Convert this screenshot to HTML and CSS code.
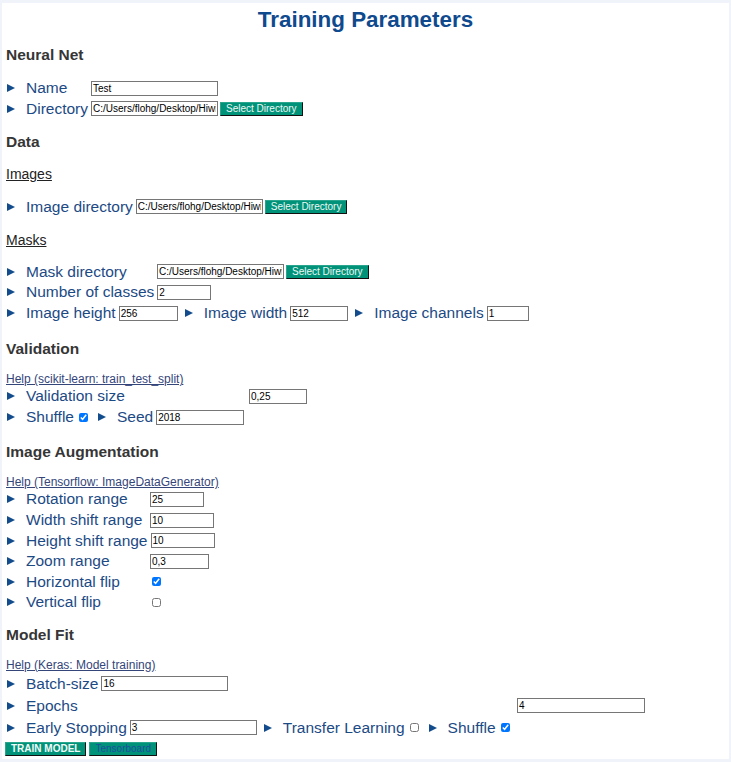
FILE: index.html
```html
<!DOCTYPE html>
<html lang="en">
<head>
<meta charset="utf-8">
<title>Training Parameters</title>
<link rel="stylesheet" href="styles.css">
</head>
<body>
<div class="panel">
  <h1 class="title">Training Parameters</h1>

  <h3 class="sec first">Neural Net</h3>
  <div class="row"><span class="tri"></span><span class="lbl w-name">Name</span><input class="inp w127" type="text" value="Test"></div>
  <div class="row"><span class="tri"></span><span class="lbl w-name">Directory</span><input class="inp w127" type="text" value="C:/Users/flohg/Desktop/Hiwi/Segmentation"><button class="btn">Select Directory</button></div>

  <h3 class="sec">Data</h3>
  <h4 class="sub">Images</h4>
  <div class="row"><span class="tri"></span><span class="lbl">Image directory</span><input class="inp w127" type="text" value="C:/Users/flohg/Desktop/Hiwi/Segmentation/images"><button class="btn">Select Directory</button></div>
  <h4 class="sub">Masks</h4>
  <div class="row"><span class="tri"></span><span class="lbl w-mask">Mask directory</span><input class="inp w127" type="text" value="C:/Users/flohg/Desktop/Hiwi/Segmentation/masks"><button class="btn">Select Directory</button></div>
  <div class="row"><span class="tri"></span><span class="lbl w-mask">Number of classes</span><input class="inp w54" type="text" value="2"></div>
  <div class="row"><span class="tri"></span><span class="lbl">Image height</span><input class="inp w59" type="text" value="256"><span class="tri mid"></span><span class="lbl">Image width</span><input class="inp w58" type="text" value="512"><span class="tri mid"></span><span class="lbl">Image channels</span><input class="inp w42" type="text" value="1"></div>

  <h3 class="sec gap-val">Validation</h3>
  <a class="help" href="#">Help (scikit-learn: train_test_split)</a>
  <div class="row"><span class="tri"></span><span class="lbl w-val">Validation size</span><input class="inp w58" type="text" value="0,25"></div>
  <div class="row"><span class="tri"></span><span class="lbl">Shuffle</span><input class="chk" type="checkbox" checked><span class="tri mid"></span><span class="lbl">Seed</span><input class="inp w88" type="text" value="2018"></div>

  <h3 class="sec gap-aug">Image Augmentation</h3>
  <a class="help" href="#">Help (Tensorflow: ImageDataGenerator)</a>
  <div class="row"><span class="tri"></span><span class="lbl w-aug">Rotation range</span><input class="inp w54" type="text" value="25"></div>
  <div class="row"><span class="tri"></span><span class="lbl w-aug">Width shift range</span><input class="inp w64" type="text" value="10"></div>
  <div class="row"><span class="tri"></span><span class="lbl w-aug">Height shift range</span><input class="inp w64" type="text" value="10"></div>
  <div class="row"><span class="tri"></span><span class="lbl w-aug">Zoom range</span><input class="inp w59" type="text" value="0,3"></div>
  <div class="row"><span class="tri"></span><span class="lbl w-aug">Horizontal flip</span><input class="chk" type="checkbox" checked></div>
  <div class="row"><span class="tri"></span><span class="lbl w-aug">Vertical flip</span><input class="chk" type="checkbox"></div>

  <h3 class="sec gap-fit">Model Fit</h3>
  <a class="help" href="#">Help (Keras: Model training)</a>
  <div class="fit">
    <div class="row tall"><span class="tri"></span><span class="lbl">Batch-size</span><input class="inp w127" type="text" value="16"></div>
    <div class="row tall"><span class="tri"></span><span class="lbl w-epochs">Epochs</span><input class="inp w128" type="text" value="4"></div>
    <div class="row tall"><span class="tri"></span><span class="lbl">Early Stopping</span><input class="inp w127" type="text" value="3"><span class="tri mid"></span><span class="lbl">Transfer Learning</span><input class="chk" type="checkbox"><span class="tri mid"></span><span class="lbl">Shuffle</span><input class="chk" type="checkbox" checked></div>
  </div>
  <div class="actions">
    <button class="btn big strong">TRAIN MODEL</button><button class="btn big blue">Tensorboard</button>
  </div>
</div>
</body>
</html>
```

FILE: styles.css
```css
html, body {
  margin: 0;
  padding: 0;
}
body {
  background: #f0f3f9;
  padding: 3px 2px;
  font-family: "Liberation Sans", Arial, sans-serif;
}
.panel {
  background: #ffffff;
  height: 756px;
  box-sizing: border-box;
  padding: 0 4px;
}
.title {
  margin: 0;
  text-align: center;
  font-size: 22.4px;
  line-height: 34px;
  font-weight: bold;
  color: #0f4a8e;
}
.sec {
  margin: 13px 0 12.8px;
  font-size: 15.5px;
  line-height: 20px;
  font-weight: bold;
  color: #363636;
}
.sec.first { margin-top: 8px; }
.sec.gap-val { margin-top: 16px; }
.sec.gap-aug { margin-top: 15px; }
.sec.gap-fit { margin-top: 12px; }
.sub {
  margin: 13.5px 0 13px;
  font-size: 14px;
  line-height: 18px;
  font-weight: normal;
  color: #222222;
  text-decoration: underline;
}
.help {
  display: block;
  font-size: 12px;
  line-height: 14px;
  color: #34457a;
  text-decoration: underline;
}
.row {
  display: flex;
  align-items: center;
  height: 20.6px;
  white-space: nowrap;
}
.row.tall { height: 22px; }
.fit { margin-top: 1px; }
.tri {
  flex: none;
  width: 0;
  height: 0;
  border-left: 8px solid #124c8c;
  border-top: 4.5px solid transparent;
  border-bottom: 4.5px solid transparent;
  margin: 0 11px 0 1px;
}
.tri.mid { margin-left: 7px; }
.lbl {
  font-size: 15.5px;
  color: #1c4a85;
  flex: none;
}
.w-name { min-width: 62px; }
.w-mask { min-width: 128px; }
.w-val { min-width: 220px; }
.w-aug { min-width: 121px; }
.w-epochs { min-width: 488px; }
.inp {
  flex: none;
  height: 15px;
  box-sizing: border-box;
  margin: 0 0 0 3px;
  padding: 0 1px;
  border: 1px solid #767676;
  border-radius: 0;
  font-family: "Liberation Sans", Arial, sans-serif;
  font-size: 10px;
  color: #000000;
  background: #ffffff;
  outline: none;
}
.w127 { width: 127px; }
.w128 { width: 128px; }
.w54 { width: 54px; }
.w58 { width: 58px; }
.w59 { width: 59px; }
.w64 { width: 64px; }
.w42 { width: 42px; }
.w88 { width: 88px; }
.chk {
  flex: none;
  width: 9px;
  height: 9px;
  margin: 0 3px 0 5px;
}
.btn {
  flex: none;
  height: 14px;
  box-sizing: border-box;
  margin: 0 0 0 2px;
  padding: 0 5px;
  background: #00937a;
  color: #eef8f5;
  border: 1px solid;
  border-color: #2aa58e #111111 #111111 #2aa58e;
  border-radius: 0;
  font-family: "Liberation Sans", Arial, sans-serif;
  font-size: 10px;
  line-height: 12px;
}
.actions {
  display: flex;
  margin-top: 3px;
}
.btn.big { height: 14px; }
.btn.strong {
  margin-left: -1px;
  font-weight: bold;
  color: #f2faf7;
}
.btn.blue {
  margin-left: 3px;
  color: #1d4f9e;
}
```
